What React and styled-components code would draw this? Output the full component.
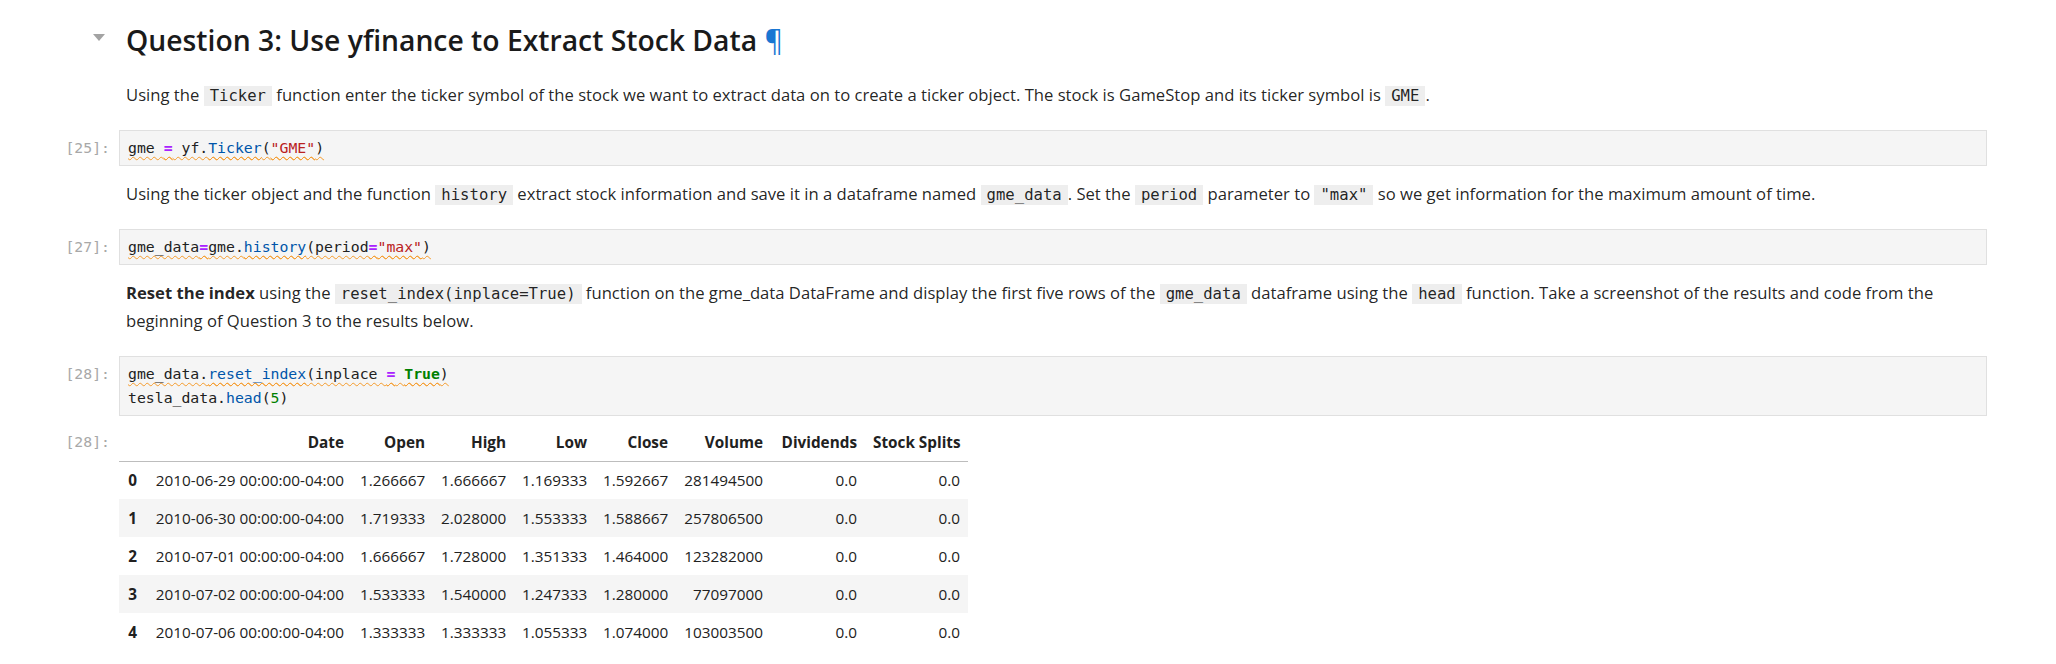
import React from 'react';
import styled, { createGlobalStyle } from 'styled-components';

const COLUMNS = [
  { key: 'idx', label: '', w: 26 },
  { key: 'date', label: 'Date', w: 207 },
  { key: 'open', label: 'Open', w: 81 },
  { key: 'high', label: 'High', w: 81 },
  { key: 'low', label: 'Low', w: 81 },
  { key: 'close', label: 'Close', w: 81 },
  { key: 'volume', label: 'Volume', w: 95 },
  { key: 'div', label: 'Dividends', w: 94 },
  { key: 'split', label: 'Stock Splits', w: 103 },
];

const ROWS = [
  ['0', '2010-06-29 00:00:00-04:00', '1.266667', '1.666667', '1.169333', '1.592667', '281494500', '0.0', '0.0'],
  ['1', '2010-06-30 00:00:00-04:00', '1.719333', '2.028000', '1.553333', '1.588667', '257806500', '0.0', '0.0'],
  ['2', '2010-07-01 00:00:00-04:00', '1.666667', '1.728000', '1.351333', '1.464000', '123282000', '0.0', '0.0'],
  ['3', '2010-07-02 00:00:00-04:00', '1.533333', '1.540000', '1.247333', '1.280000', '77097000', '0.0', '0.0'],
  ['4', '2010-07-06 00:00:00-04:00', '1.333333', '1.333333', '1.055333', '1.074000', '103003500', '0.0', '0.0'],
];

function App() {
  return (
    <>
      <GlobalStyle />
      <Notebook>
        <Cell $pad="7px 0 0 0">
          <Prompt>
            <Collapser viewBox="0 0 12 7">
              <path d="M0 0 L12 0 L6 7 Z" fill="#a3a3a3" />
            </Collapser>
          </Prompt>
          <Markdown>
            <Heading>
              Question 3: Use yfinance to Extract Stock Data <Anchor>¶</Anchor>
            </Heading>
          </Markdown>
        </Cell>

        <Cell $pad="7px 0 14px 0">
          <Prompt />
          <Markdown>
            <P>
              Using the <Code>Ticker</Code> function enter the ticker symbol of the stock we want to extract data on to
              create a ticker object. The stock is GameStop and its ticker symbol is <Code>GME</Code>.
            </P>
          </Markdown>
        </Cell>

        <Cell>
          <Prompt $pt="6px">[25]:</Prompt>
          <Input>
            <Line $wavy>
              gme <Op>=</Op> yf.<Prop>Ticker</Prop>(<Str>"GME"</Str>)
            </Line>
          </Input>
        </Cell>

        <Cell $pad="7px 0 14px 0">
          <Prompt />
          <Markdown>
            <P>
              Using the ticker object and the function <Code>history</Code> extract stock information and save it in a
              dataframe named <Code>gme_data</Code>. Set the <Code>period</Code> parameter to <Code>"max"</Code> so we
              get information for the maximum amount of time.
            </P>
          </Markdown>
        </Cell>

        <Cell>
          <Prompt $pt="6px">[27]:</Prompt>
          <Input>
            <Line $wavy>
              gme_data<Op>=</Op>gme.<Prop>history</Prop>(period<Op>=</Op>
              <Str>"max"</Str>)
            </Line>
          </Input>
        </Cell>

        <Cell $pad="7px 0 14px 0">
          <Prompt />
          <Markdown>
            <P>
              <strong>Reset the index</strong> using the <Code>reset_index(inplace=True)</Code> function on the gme_data
              DataFrame and display the first five rows of the <Code>gme_data</Code> dataframe using the{' '}
              <Code>head</Code> function. Take a screenshot of the results and code from the beginning of Question 3 to
              the results below.
            </P>
          </Markdown>
        </Cell>

        <Cell>
          <Prompt $pt="6px">[28]:</Prompt>
          <Input>
            <Line $wavy>
              gme_data.<Prop>reset_index</Prop>(inplace <Op>=</Op> <Kw>True</Kw>)
            </Line>
            <Line>
              tesla_data.<Prop>head</Prop>(<Num>5</Num>)
            </Line>
          </Input>
        </Cell>

        <Cell $pad="0 0 7px 0">
          <Prompt $lh="38px">[28]:</Prompt>
          <Output>
            <Frame>
              <colgroup>
                {COLUMNS.map(c => (
                  <Col key={c.key} $w={c.w} />
                ))}
              </colgroup>
              <thead>
                <tr>
                  {COLUMNS.map(c => (
                    <Th key={c.key}>{c.label}</Th>
                  ))}
                </tr>
              </thead>
              <tbody>
                {ROWS.map(row => (
                  <Tr key={row[0]}>
                    {row.map((v, i) => (i === 0 ? <Th key={i}>{v}</Th> : <Td key={i}>{v}</Td>))}
                  </Tr>
                ))}
              </tbody>
            </Frame>
          </Output>
        </Cell>
      </Notebook>
    </>
  );
}

const GlobalStyle = createGlobalStyle`
  body {
    margin: 0;
    background: #fff;
    font-family: "Open Sans", "Noto Sans", sans-serif;
    color: rgba(0, 0, 0, 0.87);
  }
`;

const Notebook = styled.div`
  padding: 0 69px 0 0;
`;

const Cell = styled.div`
  display: grid;
  grid-template-columns: 119px 1fr;
  padding: ${p => p.$pad || '7px 0'};
`;

const Prompt = styled.div`
  display: flex;
  justify-content: flex-end;
  align-items: flex-start;
  padding: ${p => p.$pt || '0'} 9px 0 0;
  font-family: "DejaVu Sans Mono", monospace;
  font-size: 14.8px;
  line-height: ${p => p.$lh || '24px'};
  color: #a8a8a8;
`;

const Collapser = styled.svg`
  width: 12px;
  height: 7px;
  margin: 27px 5px 0 0;
`;

const Markdown = styled.div`
  padding-left: 7px;
`;

const Heading = styled.h2`
  margin: 17px 0 17px;
  font-size: 28.3px;
  font-weight: 600;
  line-height: 33px;
  color: #1a1a1a;
`;

const Anchor = styled.span`
  color: #1976d2;
  font-weight: 400;
`;

const P = styled.p`
  margin: 0;
  font-size: 16.65px;
  line-height: 28px;
  strong {
    font-weight: 700;
  }
`;

const Code = styled.code`
  font-family: "DejaVu Sans Mono", monospace;
  font-size: 15.6px;
  line-height: 20px;
  background: #eee;
  padding: 1px 6px;
`;

const Input = styled.div`
  background: #f5f5f5;
  border: 1px solid #e0e0e0;
  padding: 5px 8px;
  font-family: "DejaVu Sans Mono", monospace;
  font-size: 14.8px;
  line-height: 24px;
  color: #212121;
`;

const Line = styled.div`
  white-space: pre;
  ${p =>
    p.$wavy &&
    `
    span, & {
      text-decoration: underline wavy #f59b2b;
      text-decoration-thickness: 1px;
      text-underline-offset: 3px;
    }
  `}
`;

const Op = styled.span`
  color: #aa22ff;
  font-weight: 700;
`;

const Prop = styled.span`
  color: #0055aa;
`;

const Str = styled.span`
  color: #ba2121;
`;

const Kw = styled.span`
  color: #008000;
  font-weight: 700;
`;

const Num = styled.span`
  color: #008000;
`;

const Output = styled.div`
  display: flex;
`;

const Frame = styled.table`
  table-layout: fixed;
  width: 849px;
  border-collapse: collapse;
  border-spacing: 0;
  font-size: 15.3px;
  color: #212121;
  thead tr {
    border-bottom: 1px solid #bdbdbd;
  }
`;

const Col = styled.col`
  width: ${p => p.$w}px;
`;

const Th = styled.th`
  height: 38px;
  padding: 0 8px;
  text-align: right;
  white-space: nowrap;
  font-weight: 700;
  box-sizing: border-box;
`;

const Td = styled.td`
  height: 38px;
  padding: 0 8px;
  text-align: right;
  white-space: nowrap;
  box-sizing: border-box;
`;

const Tr = styled.tr`
  &:nth-child(even) {
    background: #f5f5f5;
  }
`;

export default App;
